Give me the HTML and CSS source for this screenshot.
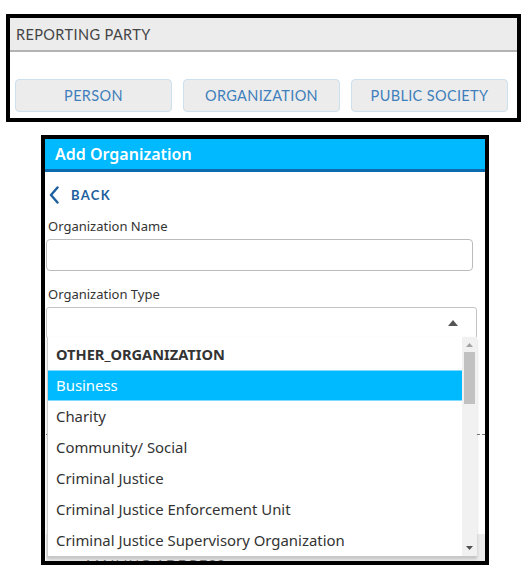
FILE: index.html
```html
<!DOCTYPE html>
<html>
<head>
<meta charset="utf-8">
<link rel="stylesheet" href="styles.css">
</head>
<body>
<div class="rp">
  <div class="rp-head">REPORTING PARTY</div>
  <div class="rp-btns">
    <div class="rp-btn">PERSON</div>
    <div class="rp-btn">ORGANIZATION</div>
    <div class="rp-btn">PUBLIC SOCIETY</div>
  </div>
</div>

<div class="ao">
  <div class="ao-head">Add Organization</div>
  <div class="ao-body">
    <div class="back">
      <svg class="chev" width="10" height="18" viewBox="0 0 10 18"><path d="M8.5 1.5 L2 9 L8.5 16.5" fill="none" stroke="#1d5f9e" stroke-width="2.4" stroke-linecap="round" stroke-linejoin="round"/></svg>
      <span class="back-text">BACK</span>
    </div>
    <div class="label first">Organization Name</div>
    <div class="input"></div>
    <div class="label second">Organization Type</div>
    <div class="select-wrap">
      <div class="select">
        <svg class="caret" width="10" height="6" viewBox="0 0 10 6"><path d="M0 6 L5 0 L10 6 Z" fill="#555"/></svg>
      </div>
      <div class="dropdown">
        <div class="items">
          <div class="group">OTHER_ORGANIZATION</div>
          <div class="item active">Business</div>
          <div class="item">Charity</div>
          <div class="item">Community/ Social</div>
          <div class="item">Criminal Justice</div>
          <div class="item">Criminal Justice Enforcement Unit</div>
          <div class="item">Criminal Justice Supervisory Organization</div>
        </div>
        <div class="sbar">
          <svg class="sb-up" width="7" height="4" viewBox="0 0 7 4"><path d="M0 4 L3.5 0 L7 4 Z" fill="#a3a3a3"/></svg>
          <div class="thumb"></div>
          <svg class="sb-down" width="7" height="4" viewBox="0 0 7 4"><path d="M0 0 L3.5 4 L7 0 Z" fill="#505050"/></svg>
        </div>
      </div>
    </div>
    <div class="under"></div>
    <div class="mail">MAILING ADDRESS</div>
  </div>
</div>
</body>
</html>
```

FILE: styles.css
```css
* { box-sizing: border-box; }
body {
  margin: 0;
  background: #fff;
  font-family: "Noto Sans", "Open Sans", sans-serif;
}
.rp {
  margin: 14px 0 0 6px;
  width: 515px;
  height: 108px;
  border: 4px solid #000;
}
.rp-head {
  height: 34px;
  background: #ececec;
  border-bottom: 2px solid #b3b3b3;
  padding-left: 6px;
  display: flex;
  align-items: center;
  font-family: Lato, sans-serif;
  font-size: 14.5px;
  letter-spacing: 0.4px;
  color: #444;
}
.rp-btns {
  display: flex;
  gap: 11px;
  padding: 27px 0 0 5px;
}
.rp-btn {
  width: 157px;
  height: 33px;
  background: #ececec;
  border: 1px solid #cde0ee;
  border-radius: 4px;
  display: flex;
  align-items: center;
  justify-content: center;
  font-family: Lato, sans-serif;
  font-size: 14.5px;
  letter-spacing: 0.35px;
  color: #3f7fbb;
}
.ao {
  margin: 13px 0 0 41px;
  width: 448px;
  height: 430px;
  border: 4px solid #000;
  overflow: hidden;
}
.ao-head {
  height: 33px;
  background: #00b9ff;
  border-bottom: 3px solid #0b6ab0;
  color: #fff;
  font-size: 16px;
  font-weight: 600;
  padding-left: 10px;
  line-height: 30px;
}
.ao-body {
  padding: 0 8px 0 1px;
}
.back {
  display: flex;
  align-items: center;
  height: 22px;
  margin-top: 12px;
  padding-left: 3px;
}
.chev { margin-right: 12px; }
.back-text {
  font-family: Lato, sans-serif;
  font-weight: 700;
  font-size: 13px;
  letter-spacing: 1.3px;
  color: #1d5f9e;
}
.label {
  font-size: 13px;
  line-height: 18px;
  color: #333;
  padding-left: 2px;
}
.label.first { margin-top: 11px; }
.label.second { margin-top: 14px; }
.input {
  margin-top: 4px;
  width: 427px;
  height: 32px;
  border: 1px solid #bbb;
  border-radius: 4px;
}
.select-wrap {
  position: relative;
  margin-top: 4px;
}
.select {
  width: 431px;
  height: 32px;
  border: 1px solid #c4c4c4;
  border-radius: 3px;
  display: flex;
  justify-content: flex-end;
  align-items: center;
  padding-right: 18px;
}
.dropdown {
  position: absolute;
  top: 30px;
  left: 1px;
  width: 430px;
  height: 220px;
  background: #fff;
  border-left: 1px solid #ccc;
  border-bottom: 1px solid #c8c8c8;
  box-shadow: 0 2px 3px rgba(0,0,0,0.18);
  display: flex;
  z-index: 2;
}
.items {
  flex: 1;
  padding-top: 1px;
}
.group {
  height: 32px;
  line-height: 32px;
  padding-left: 8px;
  font-size: 14.6px;
  font-weight: 700;
  color: #333;
}
.item {
  height: 31px;
  line-height: 31px;
  padding-left: 8px;
  font-size: 14.9px;
  color: #333;
}
.item.active {
  background: #00baff;
  color: #fff;
  border-top: 1px solid #80dbff;
  border-bottom: 1px solid #80dbff;
  line-height: 29px;
}
.sbar {
  width: 15px;
  background: #f1f1f1;
  display: flex;
  flex-direction: column;
  align-items: center;
}
.sb-up { margin-top: 6px; }
.thumb {
  margin-top: 5px;
  width: 11px;
  height: 52px;
  background: #c1c1c1;
}
.sb-down { margin-top: auto; margin-bottom: 6px; }
.under {
  height: 96px;
  border-bottom: 1px dashed #777;
  margin-right: -8px;
}
.mail {
  margin-top: 99px;
  margin-right: -8px;
  height: 44px;
  background: #ebebeb;
  padding: 22px 0 0 40px;
  font-family: Lato, sans-serif;
  font-size: 14px;
  line-height: 18px;
  color: #777;
  letter-spacing: 1px;
}
```
